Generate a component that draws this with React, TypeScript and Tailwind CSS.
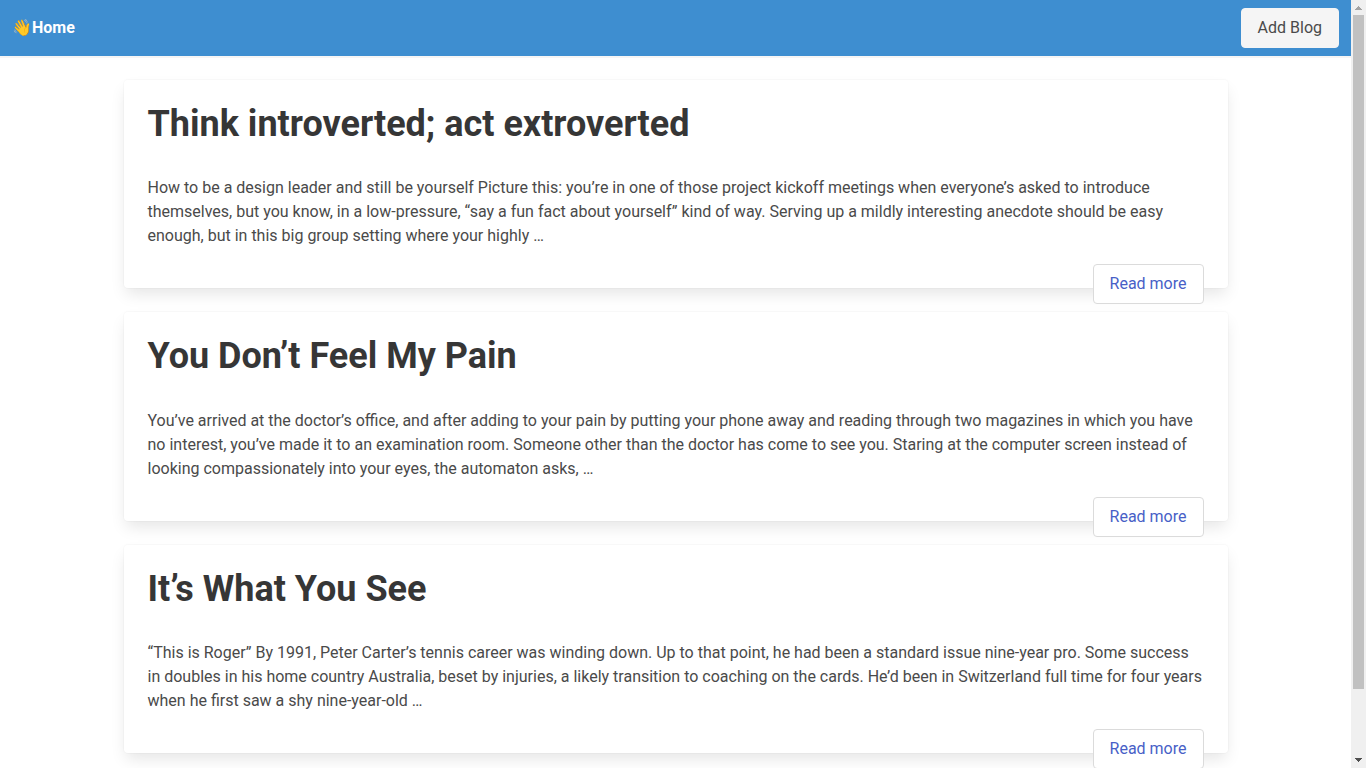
type Post = { title: string; excerpt: string };

const posts: Post[] = [
  {
    title: 'Think introverted; act extroverted',
    excerpt:
      'How to be a design leader and still be yourself Picture this: you’re in one of those project kickoff meetings when everyone’s asked to introduce themselves, but you know, in a low-pressure, “say a fun fact about yourself” kind of way. Serving up a mildly interesting anecdote should be easy enough, but in this big group setting where your highly …',
  },
  {
    title: 'You Don’t Feel My Pain',
    excerpt:
      'You’ve arrived at the doctor’s office, and after adding to your pain by putting your phone away and reading through two magazines in which you have no interest, you’ve made it to an examination room. Someone other than the doctor has come to see you. Staring at the computer screen instead of looking compassionately into your eyes, the automaton asks, …',
  },
  {
    title: 'It’s What You See',
    excerpt:
      '“This is Roger” By 1991, Peter Carter’s tennis career was winding down. Up to that point, he had been a standard issue nine-year pro. Some success in doubles in his home country Australia, beset by injuries, a likely transition to coaching on the cards. He’d been in Switzerland full time for four years when he first saw a shy nine-year-old …',
  },
];

function Navbar() {
  return (
    <nav className="flex h-14 items-center justify-between bg-[#3e8ed0] px-3 shadow-[0_2px_0_0_#f5f5f5]">
      <a href="#home" className="font-bold text-white">
        👋Home
      </a>
      <button
        type="button"
        className="h-10 rounded border border-[#f5f5f5] bg-[#f5f5f5] px-4 text-[#4a4a4a]"
      >
        Add Blog
      </button>
    </nav>
  );
}

function PostCard({ title, excerpt }: Post) {
  return (
    <article className="rounded bg-white px-6 pt-6 shadow-[0_8px_16px_-2px_rgba(10,10,10,0.1),0_0_0_1px_rgba(10,10,10,0.02)]">
      <h2 className="text-4xl leading-[1.12] font-bold text-[#363636]">{title}</h2>
      <p className="mt-8 mb-4">{excerpt}</p>
      <div className="flex h-6 items-start justify-end">
        <a
          href="#post"
          className="flex h-10 items-center rounded border border-[#dbdbdb] bg-white px-4 text-[#485fc7]"
        >
          Read more
        </a>
      </div>
    </article>
  );
}

function ScrollTrack() {
  return (
    <div aria-hidden="true" className="flex w-[15px] shrink-0 flex-col bg-[#f0f0f0]">
      <svg className="h-[15px] w-[15px] shrink-0" viewBox="0 0 15 15" shapeRendering="crispEdges">
        <path d="M7 6h1v1h1v1h1v1h1v1H4V9h1V8h1V7h1z" fill="#a3a3a3" />
      </svg>
      <div className="flex min-h-0 grow flex-col px-[2px]">
        <div className="h-[91.3%] bg-[#c1c1c1]" />
      </div>
      <svg className="h-[15px] w-[15px] shrink-0" viewBox="0 0 15 15" shapeRendering="crispEdges">
        <path d="M4 5h7v1h-1v1H9v1H8v1H7V8H6V7H5V6H4z" fill="#505050" />
      </svg>
    </div>
  );
}

export default function App() {
  return (
    <div className="flex h-screen bg-white font-[Roboto,sans-serif] text-base text-[#4a4a4a] antialiased">
      <div className="min-w-0 grow overflow-y-auto [scrollbar-width:none]">
        <Navbar />
        <main className="mx-auto flex max-w-6xl flex-col gap-6 px-6 pt-6 pb-22">
          {posts.map((post) => (
            <PostCard key={post.title} title={post.title} excerpt={post.excerpt} />
          ))}
        </main>
      </div>
      <ScrollTrack />
    </div>
  );
}
